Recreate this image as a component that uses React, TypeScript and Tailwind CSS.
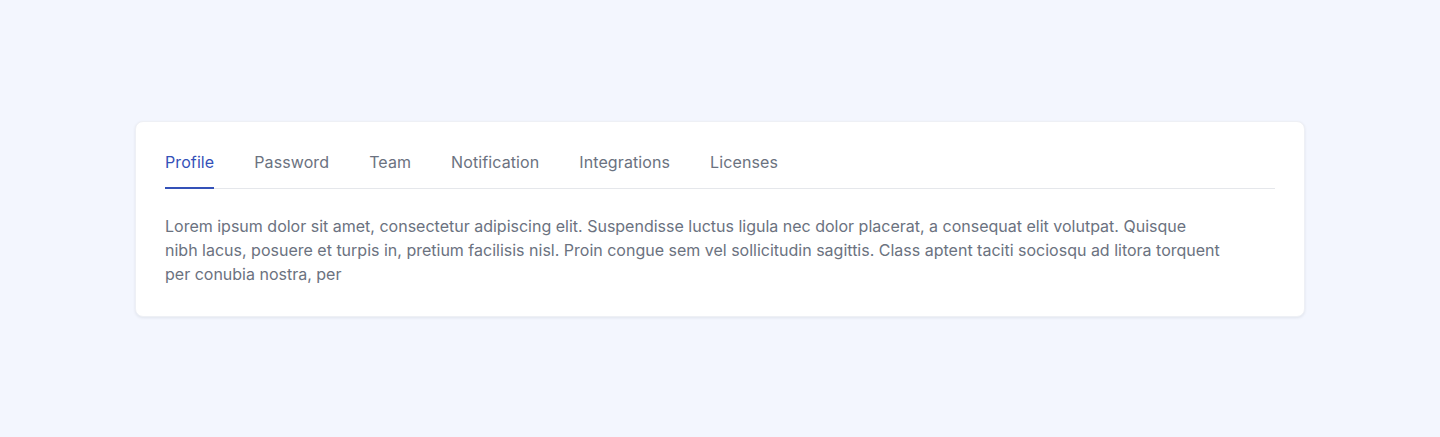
import React, { useState } from "react";

const tabs = ["Profile", "Password", "Team", "Notification", "Integrations", "Licenses"];

export default function App() {
  const [active, setActive] = useState(0);
  return (
    <div
      className="min-h-[437px] w-full bg-[#f3f6fe] flex items-center justify-center"
      style={{ fontFamily: "Inter, 'Noto Sans', sans-serif" }}
    >
      <div className="w-[1170px] bg-white rounded-lg shadow-[0_1px_3px_rgba(15,23,42,0.08)] border border-[#eef0f5] px-[29px] pt-[16px] pb-[30px]">
        <div className="flex gap-10 border-b border-[#e5e7eb]">
          {tabs.map((t, i) => (
            <button
              key={t}
              onClick={() => setActive(i)}
              className={`relative pt-[12px] pb-[14px] text-[16px] leading-[24px] tracking-[0.1px] ${
                i === active ? "text-[#3451b8]" : "text-[#6b7280]"
              }`}
            >
              {t}
              {i === active && (
                <span className="absolute left-0 right-0 -bottom-px h-[2px] bg-[#3451b8]" />
              )}
            </button>
          ))}
        </div>
        <p className="mt-[25px] max-w-[1056px] text-[16px] leading-[24px] text-[#6b7280]">
          Lorem ipsum dolor sit amet, consectetur adipiscing elit. Suspendisse luctus ligula nec dolor placerat, a consequat elit volutpat. Quisque nibh lacus, posuere et turpis in, pretium facilisis nisl. Proin congue sem vel sollicitudin sagittis. Class aptent taciti sociosqu ad litora torquent per conubia nostra, per
        </p>
      </div>
    </div>
  );
}
